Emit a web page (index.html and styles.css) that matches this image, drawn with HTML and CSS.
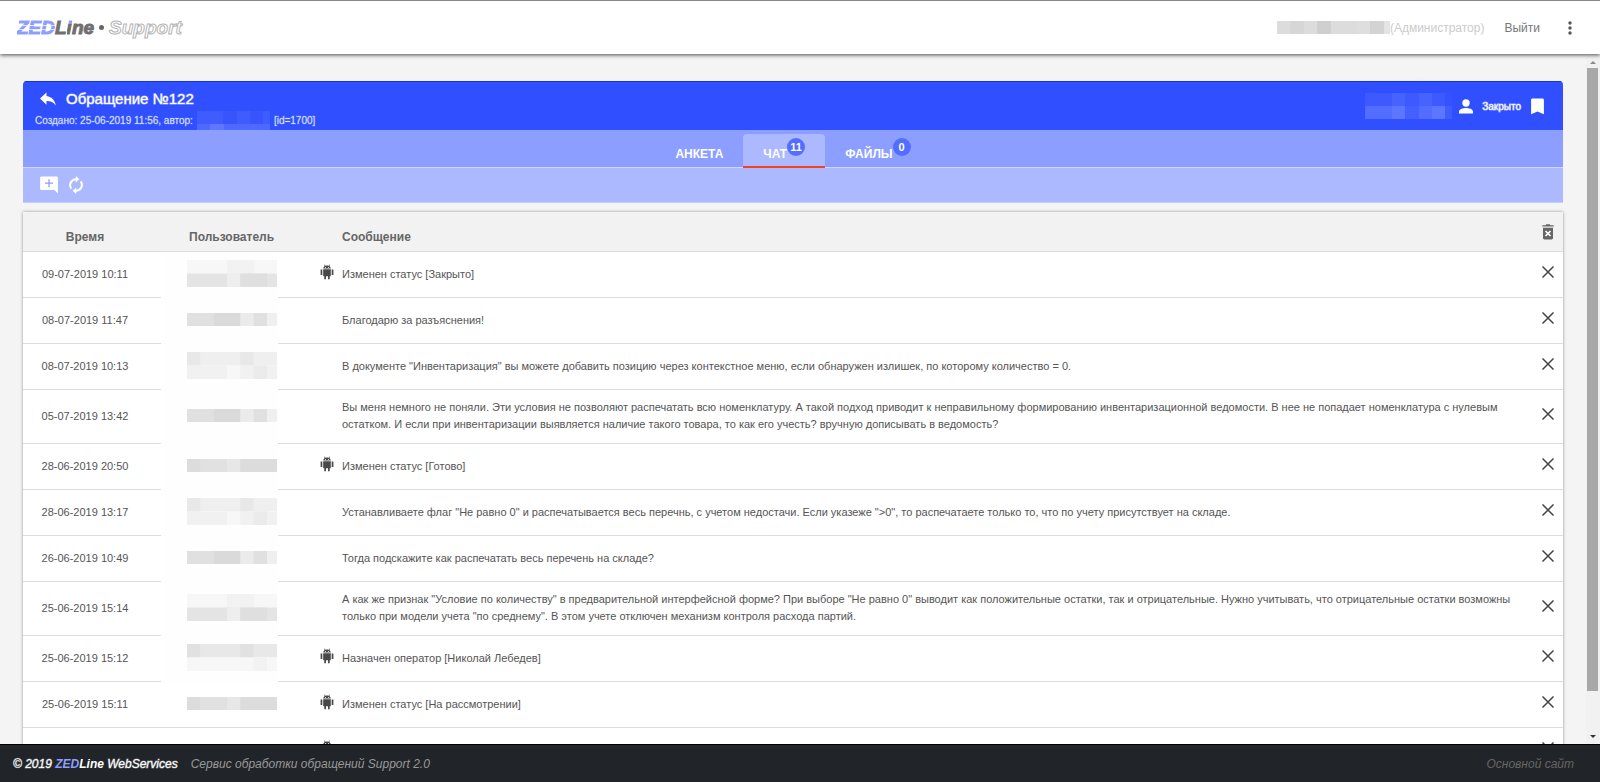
FILE: index.html
```html
<!DOCTYPE html>
<html lang="ru">
<head>
<meta charset="utf-8">
<title>ZEDLine Support</title>
<link rel="stylesheet" href="styles.css">
</head>
<body>
<svg class="defs" aria-hidden="true">
  <symbol id="close" viewBox="0 0 12 12"><path d="M.5.5L11.500 11.500M11.500.5L.5 11.500" fill="none" stroke="#444" stroke-width="1.5"/></symbol>
  <symbol id="droid" viewBox="0 0 14 16"><path d="M3.2 5.2h7.6v7H9.7V15.300H8V12.200H6V15.300H4.300V12.200H3.200zM.6 5.600h1.700v5.400H.6zM11.700 5.600h1.700v5.400h-1.700zM3.200 4.500C3.300 3.300 4 2.500 4.800 2L3.900.8l.5-.3 1 1.200c1-.4 2.200-.4 3.200 0l1-1.200.5.3L9.200 2c.8.5 1.500 1.300 1.600 2.500z" fill="#484848"/><path d="M5 2.900h1v.8H5zM8 2.900h1v.8H8z" fill="#fff"/></symbol>
  <symbol id="mosaic-low" viewBox="0 0 90 27" preserveAspectRatio="none">
    <path d="M0 0h90v13.500H0z" fill="#f7f7f7"/><path d="M40 0h27v13.500H40z" fill="#f2f2f2"/>
    <path d="M0 13.500h90V27H0z" fill="#e4e4e4"/><path d="M40 13.500h13.300V27H40z" fill="#eee"/><path d="M53.300 13.500h27V27h-27z" fill="#dfdfdf"/>
  </symbol>
  <symbol id="mosaic-line" viewBox="0 0 90 13" preserveAspectRatio="none">
    <path d="M0 0h90v13H0z" fill="#e0e0e0"/><path d="M27 0h26.300v13H27z" fill="#dadada"/><path d="M53.300 0h13.300v13H53.300z" fill="#ebebeb"/><path d="M80 0h10v13H80z" fill="#efefef"/>
  </symbol>
  <symbol id="mosaic-dark" viewBox="0 0 90 13" preserveAspectRatio="none">
    <path d="M0 0h90v13H0z" fill="#dcdcdc"/><path d="M13.300 0h26.700v13H13.300z" fill="#e1e1e1"/><path d="M40 0h13.300v13H40z" fill="#e7e7e7"/>
  </symbol>
  <symbol id="mosaic-soft" viewBox="0 0 90 27" preserveAspectRatio="none">
    <path d="M0 0h90v13.500H0z" fill="#efefef"/><path d="M0 0h13.300v13.500H0zM53.300 0h13.300v13.500H53.300z" fill="#e8e8e8"/>
    <path d="M0 13.500h90V27H0z" fill="#f1f1f1"/><path d="M40 13.500h13.300V27H40z" fill="#f7f7f7"/><path d="M66.600 13.500h13.400V27H66.600z" fill="#ebebeb"/>
  </symbol>
  <symbol id="mosaic-high" viewBox="0 0 90 27" preserveAspectRatio="none">
    <path d="M0 0h90v13.500H0z" fill="#e8e8e8"/><path d="M0 0h13.300v13.500H0zM53.300 0h13.300v13.500H53.300z" fill="#e1e1e1"/>
    <path d="M0 13.500h90V27H0z" fill="#f7f7f7"/><path d="M66.600 13.500h13.400V27H66.600z" fill="#f2f2f2"/>
  </symbol>
</svg>

<header class="topbar">
  <div class="logo"><span class="logo-zed">ZED</span><span class="logo-line">L<span class="logo-i">i</span>ne</span><span class="logo-dot"></span><span class="logo-support">Support</span></div>
  <div class="account">
    <svg class="account-name" viewBox="0 0 113 13" preserveAspectRatio="none" aria-hidden="true"><path d="M0 0h113v13H0z" fill="#dcdcdc"/><path d="M13 0h14v13H13z" fill="#d6d6d6"/><path d="M40 0h14v13H40z" fill="#cfcfcf"/><path d="M80 0h13v13H80z" fill="#dedede"/><path d="M93 0h14v13H93z" fill="#d3d3d3"/><path d="M107 0h6v13h-6z" fill="#e4e4e4"/></svg>
    <span class="role">(Администратор)</span>
    <a class="logout" href="#">Выйти</a>
    <button class="icon-button more" aria-label="Меню"><svg width="4" height="14" viewBox="0 0 4 14"><g fill="#555"><circle cx="2" cy="2" r="1.700"/><circle cx="2" cy="7" r="1.700"/><circle cx="2" cy="12" r="1.700"/></g></svg></button>
  </div>
</header>

<div class="viewport">
  <main class="content">
    <section class="panel">
      <div class="panel-head">
        <div class="ticket">
          <div class="ticket-title">
            <button class="icon-button" aria-label="Назад"><svg width="16" height="14" viewBox="0 0 16 14"><path d="M6.500 4V.5L0 6.600l6.500 6.100V9.100c4.400 0 7.300 1.400 9.300 4.300C15 9 12.200 4.700 6.500 4z" fill="#fff"/></svg></button>
            <h1>Обращение №122</h1>
          </div>
          <p class="ticket-info"><span>Создано: 25-06-2019 11:56, автор:</span><svg class="author" viewBox="0 0 73 19" preserveAspectRatio="none" aria-hidden="true"><path d="M0 0h73v19H0z" fill="#3f5cff"/><path d="M26 0h14v13H26zM53 0h13v13H53z" fill="#3854fb"/><path d="M0 13h73v6H0z" fill="#4e69ff"/><path d="M13 13h14v6H13z" fill="#5f78ff"/></svg><span>[id=1700]</span></p>
        </div>
        <div class="status">
          <svg class="assignee" viewBox="0 0 87 26" preserveAspectRatio="none" aria-hidden="true"><path d="M0 0h87v13H0z" fill="#3d59ff"/><path d="M27 0h13v13H27zM54 0h13v13H54z" fill="#4662ff"/><path d="M80 0h7v13h-7z" fill="#3552ff"/><path d="M0 13h87v13H0z" fill="#526dff"/><path d="M27 13h13v13H27zM67 13h13v13H67z" fill="#5d76ff"/><path d="M40 13h14v13H40z" fill="#4460ff"/><path d="M80 13h7v13h-7z" fill="#3f5cff"/></svg>
          <svg width="14" height="15" viewBox="0 0 14 15" aria-hidden="true"><circle cx="7" cy="4" r="3.700" fill="#fff"/><path d="M0 14.500v-2C0 9.800 4.500 8.900 7 8.900s7 .9 7 3.600v2z" fill="#fff"/></svg>
          <span class="state">Закрыто</span>
          <svg width="13" height="17" viewBox="0 0 13 17" aria-hidden="true"><path d="M1.500.5h10c.8 0 1.400.6 1.400 1.400V16.300L6.500 13.600.1 16.300V1.900C.1 1.100.7.5 1.500.5z" fill="#fff"/></svg>
        </div>
      </div>
      <nav class="tabs">
        <a class="tab" href="#">АНКЕТА</a>
        <a class="tab tab-active" href="#">ЧАТ<span class="badge">11</span></a>
        <a class="tab" href="#">ФАЙЛЫ<span class="badge">0</span></a>
      </nav>
      <div class="toolbar">
        <button class="icon-button" aria-label="Добавить сообщение"><svg width="18" height="18" viewBox="0 0 18 18"><path d="M1.500.5h15c.8 0 1.400.6 1.400 1.400v15.600l-3.500-3.500H1.500C.7 14 .1 13.400.1 12.600V1.900C.1 1.100.7.5 1.500.5z" fill="#fff"/><path d="M9 3.200v8M5 7.200h8" stroke="#8c9eff" stroke-width="1.300" fill="none"/></svg></button>
        <button class="icon-button" aria-label="Обновить"><svg width="14" height="18" viewBox="0 0 14 18"><path d="M7.500 3.200H7A5.900 5.900 0 0 0 2.300 12.600M6.500 14.800H7A5.900 5.900 0 0 0 11.700 5.400" fill="none" stroke="#fff" stroke-width="2"/><path d="M6.800 0l3.600 3.300-3.600 3.300zM7.200 18l-3.600-3.300 3.600-3.300z" fill="#fff"/></svg></button>
      </div>
    </section>

    <table class="messages">
      <thead>
        <tr>
          <th class="time">Время</th>
          <th class="user">Пользователь</th>
          <th class="kind"></th>
          <th class="text">Сообщение</th>
          <th class="action"><button class="icon-button" aria-label="Удалить все"><svg width="12" height="16" viewBox="0 0 12 16"><path d="M.3 1.200H3.500L4.300.3h3.400l.8.900h3.200v1.400H.3zM1 3.800h10v10.300c0 .8-.6 1.400-1.400 1.400H2.400c-.8 0-1.400-.6-1.400-1.400z" fill="#666"/><path d="M3.500 7l5 5M8.500 7l-5 5" stroke="#fff" stroke-width="1.700"/></svg></button></th>
        </tr>
      </thead>
      <tbody>
        <tr><td class="time">09-07-2019 10:11</td><td class="user"><svg class="name tall"><use href="#mosaic-low"/></svg></td><td class="kind"><svg class="droid"><use href="#droid"/></svg></td><td class="text">Изменен статус [Закрыто]</td><td class="action"><button class="icon-button" aria-label="Удалить"><svg class="close"><use href="#close"/></svg></button></td></tr>
        <tr><td class="time">08-07-2019 11:47</td><td class="user"><svg class="name"><use href="#mosaic-line"/></svg></td><td class="kind"></td><td class="text">Благодарю за разъяснения!</td><td class="action"><button class="icon-button" aria-label="Удалить"><svg class="close"><use href="#close"/></svg></button></td></tr>
        <tr><td class="time">08-07-2019 10:13</td><td class="user"><svg class="name tall"><use href="#mosaic-soft"/></svg></td><td class="kind"></td><td class="text">В документе "Инвентаризация" вы можете добавить позицию через контекстное меню, если обнаружен излишек, по которому количество = 0.</td><td class="action"><button class="icon-button" aria-label="Удалить"><svg class="close"><use href="#close"/></svg></button></td></tr>
        <tr><td class="time">05-07-2019 13:42</td><td class="user"><svg class="name"><use href="#mosaic-line"/></svg></td><td class="kind"></td><td class="text">Вы меня немного не поняли. Эти условия не позволяют распечатать всю номенклатуру. А такой подход приводит к неправильному формированию инвентаризационной ведомости. В нее не попадает номенклатура с нулевым остатком. И если при инвентаризации выявляется наличие такого товара, то как его учесть? вручную дописывать в ведомость?</td><td class="action"><button class="icon-button" aria-label="Удалить"><svg class="close"><use href="#close"/></svg></button></td></tr>
        <tr><td class="time">28-06-2019 20:50</td><td class="user"><svg class="name"><use href="#mosaic-dark"/></svg></td><td class="kind"><svg class="droid"><use href="#droid"/></svg></td><td class="text">Изменен статус [Готово]</td><td class="action"><button class="icon-button" aria-label="Удалить"><svg class="close"><use href="#close"/></svg></button></td></tr>
        <tr><td class="time">28-06-2019 13:17</td><td class="user"><svg class="name tall"><use href="#mosaic-soft"/></svg></td><td class="kind"></td><td class="text">Устанавливаете флаг "Не равно 0" и распечатывается весь перечнь, с учетом недостачи. Если указеже "&gt;0", то распечатаете только то, что по учету присутствует на складе.</td><td class="action"><button class="icon-button" aria-label="Удалить"><svg class="close"><use href="#close"/></svg></button></td></tr>
        <tr><td class="time">26-06-2019 10:49</td><td class="user"><svg class="name"><use href="#mosaic-line"/></svg></td><td class="kind"></td><td class="text">Тогда подскажите как распечатать весь перечень на складе?</td><td class="action"><button class="icon-button" aria-label="Удалить"><svg class="close"><use href="#close"/></svg></button></td></tr>
        <tr><td class="time">25-06-2019 15:14</td><td class="user"><svg class="name tall"><use href="#mosaic-low"/></svg></td><td class="kind"></td><td class="text">А как же признак "Условие по количеству" в предварительной интерфейсной форме? При выборе "Не равно 0" выводит как положительные остатки, так и отрицательные. Нужно учитывать, что отрицательные остатки возможны только при модели учета "по среднему". В этом учете отключен механизм контроля расхода партий.</td><td class="action"><button class="icon-button" aria-label="Удалить"><svg class="close"><use href="#close"/></svg></button></td></tr>
        <tr><td class="time">25-06-2019 15:12</td><td class="user"><svg class="name tall"><use href="#mosaic-high"/></svg></td><td class="kind"><svg class="droid"><use href="#droid"/></svg></td><td class="text">Назначен оператор [Николай Лебедев]</td><td class="action"><button class="icon-button" aria-label="Удалить"><svg class="close"><use href="#close"/></svg></button></td></tr>
        <tr class="plain"><td class="time">25-06-2019 15:11</td><td class="user"><svg class="name"><use href="#mosaic-dark"/></svg></td><td class="kind"><svg class="droid"><use href="#droid"/></svg></td><td class="text">Изменен статус [На рассмотрении]</td><td class="action"><button class="icon-button" aria-label="Удалить"><svg class="close"><use href="#close"/></svg></button></td></tr>
        <tr class="plain"><td class="time"></td><td class="user"></td><td class="kind"><svg class="droid"><use href="#droid"/></svg></td><td class="text"></td><td class="action"><button class="icon-button" aria-label="Удалить"><svg class="close"><use href="#close"/></svg></button></td></tr>
      </tbody>
    </table>
  </main>
  <div class="scrollbar" aria-hidden="true">
    <svg width="6" height="3" viewBox="0 0 6 3"><path d="M0 3L3 0l3 3z" fill="#8a8a8a"/></svg>
    <div class="scroll-track"><div class="scroll-thumb"></div></div>
    <svg width="6" height="3" viewBox="0 0 6 3"><path d="M0 0l3 3 3-3z" fill="#333"/></svg>
  </div>
</div>

<footer class="footer">
  <span class="copyright">© 2019 <b><span class="brand">ZED</span>Line</b> WebServices</span>
  <span class="about">Сервис обработки обращений Support 2.0</span>
  <a class="site" href="#">Основной сайт</a>
</footer>
</body>
</html>
```
FILE: styles.css
```css
* { box-sizing: border-box; }
body {
  margin: 0;
  height: 100vh;
  display: flex;
  flex-direction: column;
  overflow: hidden;
  background: #f4f4f4;
  color: #555;
  font-family: "Liberation Sans", Arial, sans-serif;
  font-size: 11px;
}
a { color: inherit; text-decoration: none; }
svg { display: block; flex: none; }
.defs { position: absolute; width: 0; height: 0; }
.icon-button { display: block; padding: 0; border: 0; background: none; cursor: pointer; }

.topbar {
  position: relative;
  z-index: 1;
  display: flex;
  align-items: center;
  justify-content: space-between;
  height: 54px;
  flex: none;
  padding: 0 28px 0 17px;
  border-top: 1px solid #888;
  background: #fff;
  box-shadow: 0 1px 4px rgba(0, 0, 0, .7);
}
.logo { display: flex; align-items: center; font-size: 19px; line-height: 22px; font-weight: bold; font-style: italic; }
.logo-zed {
  background: linear-gradient(#8c9eff 0 8px, #dde2ff 8px 9px, #8c9eff 9px 12px, #dde2ff 12px 13px, #8c9eff 13px);
  background-clip: text;
  color: transparent;
  -webkit-text-stroke: 1px transparent;
}
.logo-line { color: #707070; -webkit-text-stroke: 1px #707070; }
.logo-i { background: linear-gradient(#8c9eff 0 7px, #707070 7px); background-clip: text; color: transparent; -webkit-text-stroke: 1px transparent; }
.logo-dot { width: 5px; height: 5px; margin: 0 5px; border-radius: 50%; background: #666; }
.logo-support { color: #fff; -webkit-text-stroke: 1px #b5b5b5; }
.account { display: flex; align-items: center; font-size: 12px; }
.account-name { width: 113px; height: 13px; }
.role { color: #ccc; }
.logout { margin-left: 20px; color: #777; }
.more { margin-left: 28px; }

.viewport { display: flex; flex: 1; min-height: 0; }
.content { flex: 1; min-width: 0; padding: 27px 23px 0; overflow-y: auto; scrollbar-width: none; }
.panel { border-radius: 4px 4px 0 0; overflow: hidden; }
.panel-head {
  display: flex;
  justify-content: space-between;
  height: 49px;
  padding: 0 19px 0 12px;
  background: #304ffe;
  border-top: 1px solid #1030f0;
  color: #fff;
}
.ticket-title { display: flex; align-items: center; gap: 10px; padding: 7px 0 0 5px; }
h1 { margin: 0; font-size: 15px; line-height: 20px; font-weight: normal; -webkit-text-stroke: 1px rgba(255, 255, 255, .5); }
.ticket-info { display: flex; align-items: center; gap: 4px; height: 23px; margin: 0; color: #dfe4ff; font-size: 10px; -webkit-text-stroke: 1px rgba(223, 228, 255, .2); }
.author { width: 73px; height: 19px; }
.status { display: flex; align-items: center; gap: 7px; }
.state { margin: 0 3px 0 2px; font-size: 10px; -webkit-text-stroke: 1px rgba(255, 255, 255, .5); }
.assignee { width: 87px; height: 26px; }
.tabs {
  display: flex;
  justify-content: center;
  height: 38px;
  padding-top: 4px;
  background: #8c9eff;
  border-bottom: 1px solid #cfd6ff;
  color: #fff;
  font-size: 12px;
  font-weight: bold;
}
.tab { display: flex; padding: 0 20px; line-height: 41px; height: 34px; border-radius: 4px 4px 0 0; }
.tab-active { background: #adb9ff; border-bottom: 2px solid #f44322; }
.badge {
  width: 18px;
  height: 18px;
  margin-top: 4px;
  border-radius: 50%;
  background: #536dfe;
  font-size: 11px;
  line-height: 18px;
  text-align: center;
}
.toolbar { display: flex; align-items: center; gap: 11px; height: 35px; padding-left: 17px; background: #adb9ff; border-bottom: 1px solid #c5ceff; }

.messages {
  width: 100%;
  margin-top: 9px;
  border-collapse: separate;
  border-spacing: 0;
  table-layout: fixed;
  background: #fff;
  box-shadow: 0 0 3px rgba(0, 0, 0, .4);
}
th, td { height: 46px; padding: 0; border-bottom: 1px solid #ddd; line-height: 17px; text-align: left; vertical-align: middle; }
th { height: 40px; padding-top: 11px; background: #f2f2f2; color: #666; font-size: 12px; }
.time { width: 138px; padding-right: 14px; text-align: center; }
.user { width: 117px; padding-left: 26px; }
th.user { padding-left: 28px; white-space: nowrap; }
td.user { padding-bottom: 3px; background: #fefefe; border-bottom-color: #fdfdfd; }
.plain td.user { background: #fff; border-bottom-color: #ddd; }
.kind { width: 64px; padding-left: 42px; }
tbody .time, tbody .text { padding-top: 9px; padding-bottom: 10px; }
.action { width: 30px; padding-left: 9px; }
th.action { padding-top: 0; }
.name { width: 90px; height: 13px; }
.tall { height: 27px; }
.droid { width: 14px; height: 16px; margin-bottom: 6px; }
.close { width: 12px; height: 12px; margin-bottom: 6px; }

.scrollbar { display: flex; flex-direction: column; align-items: center; gap: 4px; width: 14px; padding: 7px 0 6px; background: #f1f1f1; }
.scroll-track { flex: 1; align-self: stretch; padding: 0 2px 0 1px; }
.scroll-thumb { height: 94%; background: #a8a8a8; }

.footer {
  position: relative;
  display: flex;
  align-items: center;
  height: 38px;
  flex: none;
  padding: 0 26px 0 13px;
  border-top: 1px solid #000;
  background: #212529;
  color: #999;
  font-size: 12px;
  font-style: italic;
}
.copyright { color: #fff; -webkit-text-stroke: 1px rgba(255, 255, 255, .4); }
.copyright b { -webkit-text-stroke: 0; }
.brand { color: #8c9eff; }
.about { margin-left: 13px; }
.site { margin-left: auto; color: #666; }
```
